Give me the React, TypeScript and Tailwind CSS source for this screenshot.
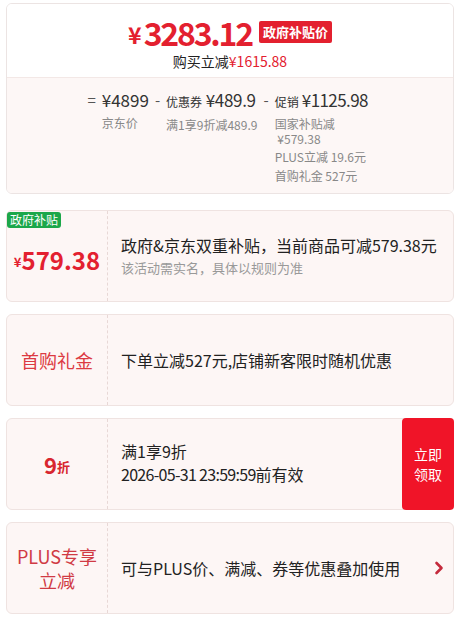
import React from "react";

const F = { fontFamily: '"Noto Sans CJK SC", "Noto Sans", sans-serif' };

function Chevron() {
  return (
    <svg width="10" height="14" viewBox="0 0 10 14" fill="none">
      <path d="M2.5 2l5 5-5 5" stroke="#c42a3c" strokeWidth="2.6" strokeLinecap="round" strokeLinejoin="round" />
    </svg>
  );
}

export default function App() {
  return (
    <div className="w-[462px] h-[617px] bg-white pl-[6px] pr-[8px] pt-[3px] flex flex-col gap-[12px] text-[#222]" style={F}>
      {/* Top card */}
      <div className="border border-[#ece4e3] rounded-[6px] overflow-hidden flex flex-col">
        <div className="bg-white flex flex-col items-center pt-[12px] h-[73px]">
          <div className="flex items-center h-[32px]">
            <span className="text-[#e3202f] text-[23px] font-bold leading-none mt-[4px] mr-[2px]">¥</span>
            <span className="text-[#e3202f] text-[32px] font-semibold leading-none tracking-[-2.2px]">3283.12</span>
            <span className="ml-[7px] bg-[#e3202f] text-white text-[13px] font-bold px-[4px] py-[1px] rounded-[2px] leading-[20px]">政府补贴价</span>
          </div>
          <div className="text-[14px] leading-[18px] mt-[4px] text-[#222]">
            购买立减<span className="text-[#e3202f]">¥1615.88</span>
          </div>
        </div>
        <div className="border-t border-[#f3e8e6] bg-[#fdf7f6] h-[116px] flex justify-center pt-[11px] pr-[6px]">
          <div className="flex items-start">
            <span className="text-[15px] text-[#555] leading-[22px] mr-[6px]">=</span>
            <div className="flex flex-col">
              <span className="text-[17px] leading-[22px] text-[#333]">¥4899</span>
              <span className="text-[12px] leading-[16px] text-[#888] mt-[4px]">京东价</span>
            </div>
            <span className="text-[15px] text-[#555] leading-[22px] mx-[6px]">-</span>
            <div className="flex flex-col">
              <span className="text-[17px] leading-[22px] text-[#333] tracking-[-0.3px]"><span className="text-[12px] tracking-normal">优惠券</span> ¥489.9</span>
              <span className="text-[12px] leading-[16px] text-[#888] mt-[4px]">满1享9折减489.9</span>
            </div>
            <span className="text-[15px] text-[#555] leading-[22px] mx-[6px]">-</span>
            <div className="flex flex-col w-[92px]">
              <span className="text-[17px] leading-[22px] text-[#333] whitespace-nowrap tracking-[-0.6px]"><span className="text-[12px] tracking-normal">促销</span> ¥1125.98</span>
              <span className="text-[12px] leading-[15px] text-[#888] mt-[3px]">国家补贴减<br />&nbsp;¥579.38</span>
              <span className="text-[12px] leading-[16px] text-[#888] mt-[3px]">PLUS立减 19.6元</span>
              <span className="text-[12px] leading-[16px] text-[#888] mt-[3px]">首购礼金 527元</span>
            </div>
          </div>
        </div>
      </div>

      {/* Card 2 */}
      <div className="relative mt-[4px] h-[92px] border border-[#efe3e1] rounded-[6px] bg-[#fdf6f5] flex">
        <span className="absolute left-[0px] top-[1px] bg-[#1ca74a] text-white text-[12px] leading-[16px] px-[3px] rounded-[3px]">政府补贴</span>
        <div className="w-[101px] border-r border-dashed border-[#e8d8d6] flex items-center justify-center pt-[7px]">
          <span className="text-[#e3202f] text-[13px] font-bold mt-[4px]">¥</span>
          <span className="text-[#e3202f] text-[24px] font-bold leading-none">579.38</span>
        </div>
        <div className="flex-1 flex flex-col justify-center pl-[13px] pb-[2px]">
          <span className="text-[16px] leading-[22px] text-[#222] whitespace-nowrap">政府&京东双重补贴，当前商品可减579.38元</span>
          <span className="text-[13px] leading-[18px] text-[#999] mt-[3px]">该活动需实名，具体以规则为准</span>
        </div>
      </div>

      {/* Card 3 */}
      <div className="h-[92px] border border-[#efe3e1] rounded-[6px] bg-[#fdf6f5] flex">
        <div className="w-[101px] border-r border-dashed border-[#e8d8d6] flex items-center justify-center">
          <span className="text-[#dc3a42] text-[18px] leading-[24px]">首购礼金</span>
        </div>
        <div className="flex-1 flex items-center pl-[13px]">
          <span className="text-[16px] leading-[22px] text-[#222]">下单立减527元,店铺新客限时随机优惠</span>
        </div>
      </div>

      {/* Card 4 */}
      <div className="h-[92px] border border-[#efe3e1] rounded-[6px] bg-[#fdf6f5] flex">
        <div className="w-[101px] border-r border-dashed border-[#e8d8d6] flex items-center justify-center">
          <span className="text-[#d8262f] text-[22px] font-bold leading-none">9</span>
          <span className="text-[#d8262f] text-[13px] font-bold leading-none mt-[4px]">折</span>
        </div>
        <div className="flex-1 flex flex-col justify-center pl-[13px] pb-[4px]">
          <span className="text-[16px] leading-[22px] text-[#222]">满1享9折</span>
          <span className="text-[16px] leading-[22px] text-[#222] mt-[1px] tracking-[-0.7px]">2026-05-31 23:59:59<span className="tracking-normal">前有效</span></span>
        </div>
        <div className="w-[52px] -my-[1px] -mr-[1px] bg-[#f01428] rounded-[4px] flex items-center justify-center">
          <span className="text-white text-[14px] leading-[20px] text-center">立即<br />领取</span>
        </div>
      </div>

      {/* Card 5 */}
      <div className="h-[92px] border border-[#efe3e1] rounded-[6px] bg-[#fdf6f5] flex">
        <div className="w-[101px] border-r border-dashed border-[#e8d8d6] flex items-center justify-center">
          <span className="text-[#d03a44] text-[18px] leading-[24px] text-center">PLUS专享<br />立减</span>
        </div>
        <div className="flex-1 flex items-center pl-[13px] pr-[9px]">
          <span className="flex-1 text-[16px] leading-[22px] text-[#222]">可与PLUS价、满减、券等优惠叠加使用</span>
          <Chevron />
        </div>
      </div>
    </div>
  );
}
